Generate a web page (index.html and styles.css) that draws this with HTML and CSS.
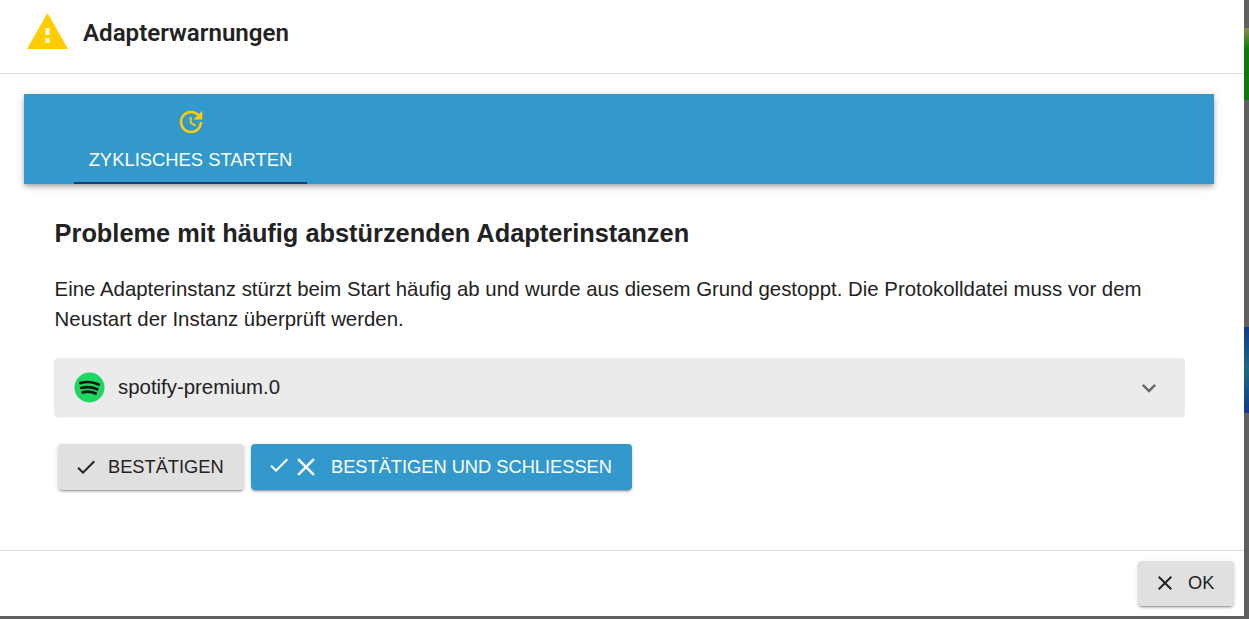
FILE: index.html
```html
<!DOCTYPE html>
<html lang="de">
<head>
<meta charset="utf-8">
<title>Adapterwarnungen</title>
<link rel="stylesheet" href="styles.css">
</head>
<body>
<div class="backdrop">
  <div class="dialog">
    <header class="dialog-header">
      <svg class="warn-icon" viewBox="0 0 41 36"><path d="M20.500 0 41 36H0z" fill="#ffcc00"/><rect x="18.500" y="15" width="4" height="7" fill="#fff" fill-opacity=".9"/><rect x="18.500" y="25" width="4" height="5" fill="#fff" fill-opacity=".9"/></svg>
      <h1 class="dialog-title">Adapterwarnungen</h1>
    </header>
    <main class="dialog-content">
      <nav class="tabs">
        <div class="tab">
          <svg class="tab-icon" viewBox="0 0 24 24"><path fill="#ffcc00" d="M11 8v5l4.250 2.520.770-1.280-3.520-2.090V8H11zm10 2V3l-2.640 2.640A8.960 8.960 0 0 0 12 3a9 9 0 1 0 9 9h-2a7 7 0 1 1-7-7c1.930 0 3.680.790 4.940 2.060L14 10h7z"/></svg>
          <span class="tab-label">ZYKLISCHES STARTEN</span>
        </div>
      </nav>
      <section class="panel">
        <h2 class="panel-title">Probleme mit häufig abstürzenden Adapterinstanzen</h2>
        <p class="panel-text">Eine Adapterinstanz stürzt beim Start häufig ab und wurde aus diesem Grund gestoppt. Die Protokolldatei muss vor dem Neustart der Instanz überprüft werden.</p>
        <div class="accordion">
          <svg class="spotify" viewBox="0 0 32 32"><circle cx="16" cy="16" r="15.500" fill="#1ed760"/><path d="M6.500 11.500c6-1.800 13-1.400 19 1.500M7.500 16.500c5.500-1.500 11.300-1.100 16.500 1.300M9 21c4.500-1.100 9.300-.8 13.500 1.200" fill="none" stroke="#111" stroke-width="2.800" stroke-linecap="round"/></svg>
          <span class="accordion-label">spotify-premium.0</span>
          <svg class="chevron" viewBox="0 0 24 24"><path fill="#666" d="M16.590 8.590 12 13.170 7.410 8.590 6 10l6 6 6-6z"/></svg>
        </div>
        <div class="actions">
          <button class="btn btn-grey btn-confirm">
            <svg class="btn-icon" viewBox="0 0 24 24"><path fill="currentColor" d="M9 16.170 4.830 12l-1.420 1.410L9 19 21 7l-1.410-1.410z"/></svg>
            BESTÄTIGEN
          </button>
          <button class="btn btn-blue">
            <span class="icon-pair">
              <svg class="pair-check" viewBox="0 0 24 24"><path fill="currentColor" d="M9 16.170 4.830 12l-1.420 1.410L9 19 21 7l-1.410-1.410z"/></svg>
              <svg class="pair-close" viewBox="0 0 24 24"><path fill="currentColor" d="M19 6.410 17.590 5 12 10.590 6.410 5 5 6.410 10.590 12 5 17.590 6.410 19 12 13.410 17.590 19 19 17.590 13.410 12z"/></svg>
            </span>
            BESTÄTIGEN UND SCHLIESSEN
          </button>
        </div>
      </section>
    </main>
    <footer class="dialog-footer">
      <button class="btn btn-grey btn-ok">
        <svg class="btn-icon" viewBox="0 0 24 24"><path fill="currentColor" d="M19 6.410 17.590 5 12 10.590 6.410 5 5 6.410 10.590 12 5 17.590 6.410 19 12 13.410 17.590 19 19 17.590 13.410 12z"/></svg>
        OK
      </button>
    </footer>
  </div>
  <div class="peek peek-green"></div>
  <div class="peek peek-blue"></div>
</div>
</body>
</html>
```
FILE: styles.css
```css
* { box-sizing: border-box; }
html, body { margin: 0; height: 100%; overflow: hidden; }
body { font-family: "Liberation Sans", Arial, sans-serif; color: rgba(0,0,0,.87); }
.backdrop { position: relative; width: 1249px; height: 619px; background: #606060; }
.dialog { width: 1244px; height: 616px; background: #fff; display: flex; flex-direction: column; }
.dialog-header { height: 74px; flex: none; border-bottom: 1px solid #e0e0e0; display: flex; align-items: center; padding: 0 0 6px 27px; }
.warn-icon { width: 41px; height: 36px; flex: none; margin-bottom: 5px; }
.dialog-title { margin: 0 0 0 15px; font: 600 24.100px/1.2 Roboto, sans-serif; color: #222; }
.dialog-content { flex: 1; padding: 20px 30px 0 24px; }
.tabs { height: 90px; background: #3399cc; padding-left: 50px; box-shadow: 0 2px 4px -1px rgba(0,0,0,.2), 0 4px 5px rgba(0,0,0,.14), 0 1px 10px rgba(0,0,0,.12); }
.tab { width: 233px; height: 90px; border-bottom: 2px solid #1e3a6e; display: flex; flex-direction: column; align-items: center; padding-top: 13px; }
.tab-icon { width: 30px; height: 30px; display: block; flex: none; }
.tab-label { margin-top: 13px; font-size: 18.400px; line-height: 20px; color: #fff; }
.panel { padding: 33px 0 0 30px; }
.panel-title { margin: 0 0 0 .6px; font-size: 25.360px; line-height: 32px; font-weight: 700; color: #222; }
.panel-text { margin: 25px 0 0 .6px; font-size: 20.400px; line-height: 30px; color: #222; max-width: 1120px; }
.accordion { margin-top: 24px; width: 1131px; height: 59px; background: #ebebeb; border-radius: 4px; box-shadow: 0 1px 1px -1px rgba(0,0,0,.25); display: flex; align-items: center; padding: 0 22px 0 20px; }
.spotify { width: 31px; height: 31px; flex: none; }
.accordion-label { margin-left: 13px; font-size: 20.400px; color: #222; flex: 1; }
.chevron { width: 28px; height: 28px; }
.actions { display: flex; gap: 7px; margin: 27px 0 0 4px; }
.btn { display: inline-flex; align-items: center; height: 46px; border: 0; border-radius: 4px; font-family: inherit; font-size: 18.250px; padding: 0; box-shadow: 0 3px 1px -2px rgba(0,0,0,.2), 0 2px 2px rgba(0,0,0,.14), 0 1px 5px rgba(0,0,0,.12); }
.btn-grey { background: #e0e0e0; color: #222; }
.btn-blue { background: #3399cc; color: #fff; width: 381px; padding-left: 16px; }
.btn-confirm { width: 186px; padding-left: 16px; }
.btn-ok { width: 96px; height: 45px; padding: 0 0 1px 15px; }
.btn-ok .btn-icon { margin-right: 11px; }
.btn-icon { width: 24px; height: 24px; flex: none; margin-right: 10px; }
.icon-pair { display: inline-flex; align-items: center; margin-right: 10px; }
.pair-check { width: 24px; height: 24px; margin-top: -4px; }
.pair-close { width: 30px; height: 30px; }
.dialog-footer { height: 66px; flex: none; border-top: 1px solid #e0e0e0; padding: 10px 10px 0 0; display: flex; justify-content: flex-end; align-items: flex-start; }
.peek { position: absolute; right: 0; width: 5px; }
.peek-green { top: 28px; height: 72px; background: linear-gradient(#8a8a50, #0a7a0a 30%, #0a7a0a); }
.peek-blue { top: 327px; height: 86px; background: linear-gradient(#0f3b8c, #1a6a80 50%, #0f3b8c); }
```
